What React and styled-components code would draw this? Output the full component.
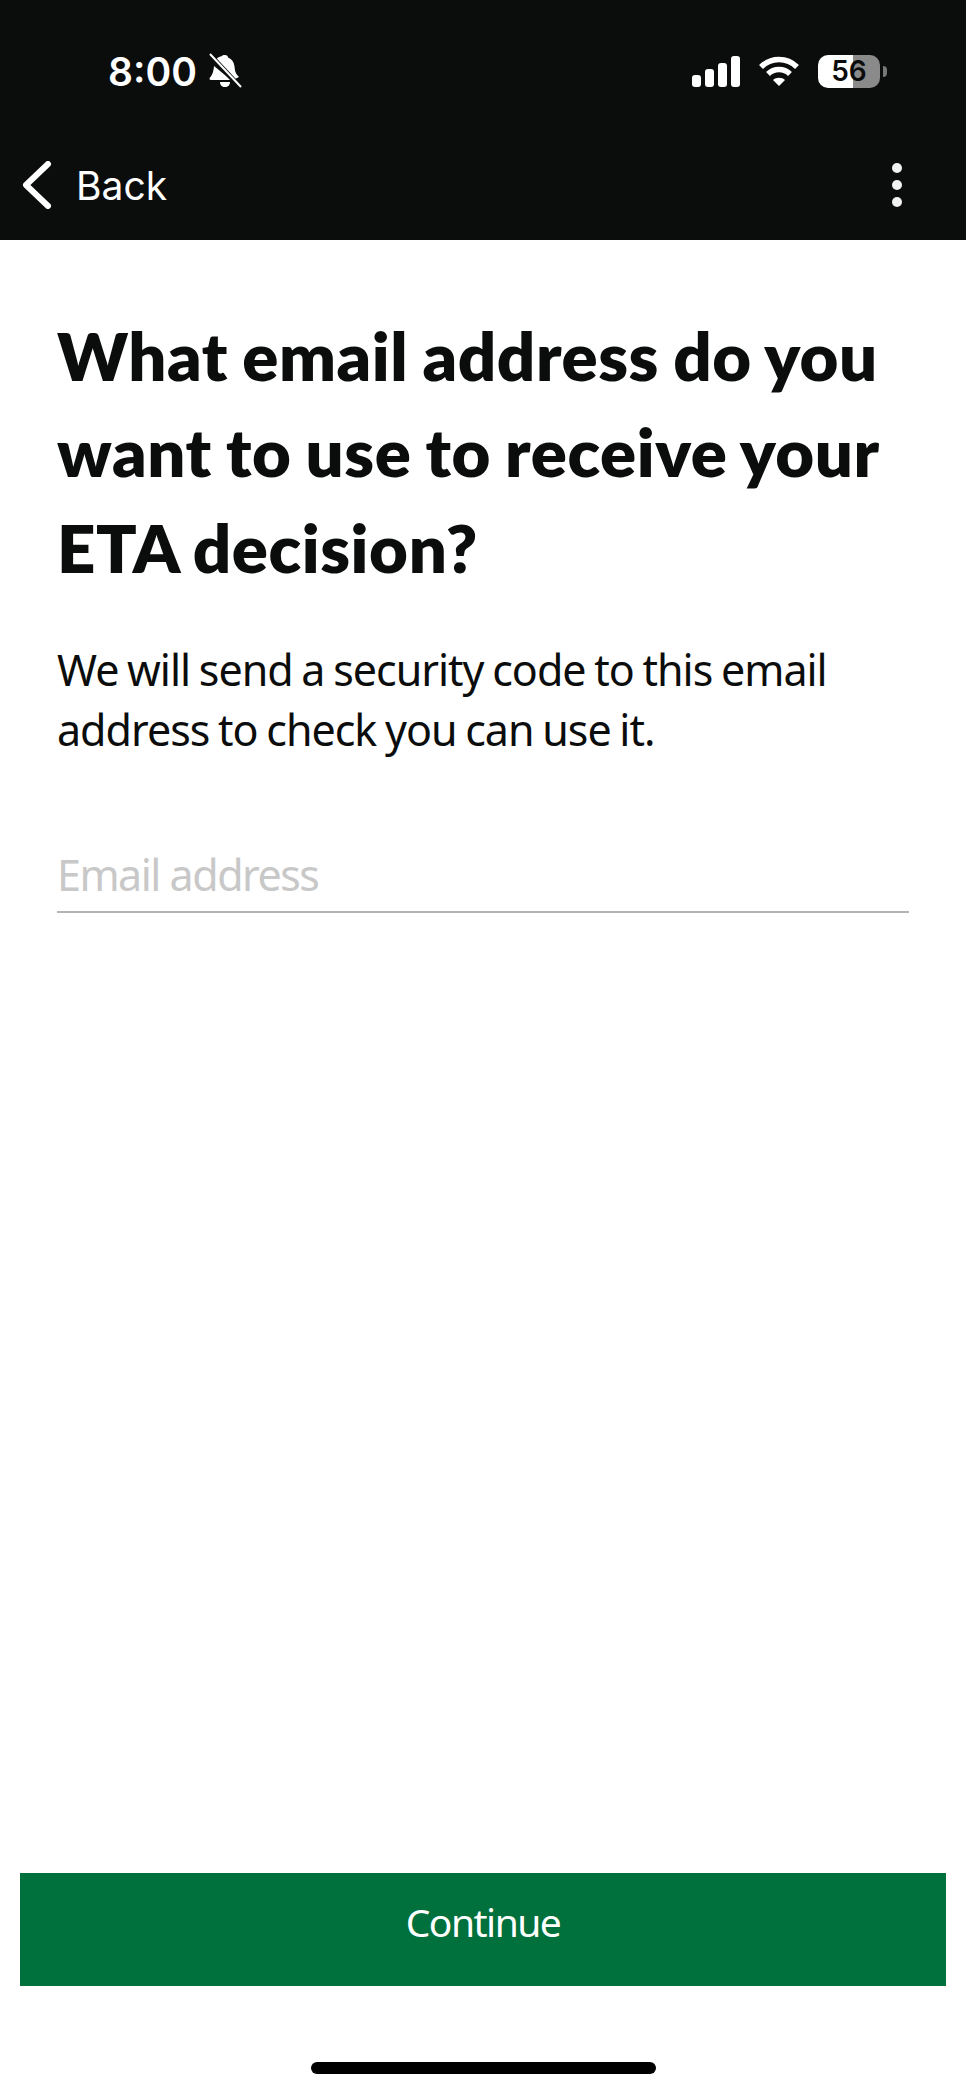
import React from "react";
import styled, { createGlobalStyle } from "styled-components";

const Global = createGlobalStyle`
  html, body { margin: 0; padding: 0; background: #fff; }
  #root { height: 2094px; }
`;
const Page = styled.div`
  width: 966px; height: 2094px; display: flex; flex-direction: column;
  font-family: "Noto Sans", "Open Sans", sans-serif; color: #0b0c0c; overflow: hidden;
`;
const Header = styled.header`
  height: 240px; background: #0b0c0c; color: #fff; display: flex; flex-direction: column;
  box-sizing: border-box; flex: none;
`;
const StatusBar = styled.div`
  height: 142px; flex: none; display: flex; align-items: center; justify-content: space-between;
  padding: 0 86px 0 108px; box-sizing: border-box;
`;
const StatusLeft = styled.div`display: flex; align-items: center; gap: 11px;`;
const Time = styled.span`font: 600 39px/1 Inter, sans-serif;`;
const StatusRight = styled.div`display: flex; align-items: center; gap: 18px;`;
const Battery = styled.div`
  width: 62px; height: 33px; border-radius: 10px; display: flex; align-items: center; justify-content: center;
  background: linear-gradient(90deg, #fff 0 56%, #8a8a8a 56% 100%);
  color: #0b0c0c; font: 600 28px/1 Inter, sans-serif; position: relative;
  &::after { content: ""; position: absolute; right: -7px; top: 11px; width: 4px; height: 11px; background: #777; border-radius: 0 4px 4px 0; }
`;
const NavBar = styled.nav`
  flex: 1; display: flex; align-items: center; justify-content: space-between;
  padding: 0 62px 12px 22px;
`;
const BackLink = styled.div`
  display: flex; align-items: center; gap: 24px; font: 400 39px/1 Inter, sans-serif;
`;
const Main = styled.main`flex: 1; padding: 0 57px; display: flex; flex-direction: column;`;
const Title = styled.h1`
  margin: 0; padding-top: 67px; font: 800 67px/96px Lato, "Noto Sans", sans-serif;
  letter-spacing: 0.6px; word-spacing: -2px;
`;
const Lead = styled.p`
  margin: 45px 0 0; font: 400 43px/60px "Noto Sans", sans-serif;
  letter-spacing: -1px; word-spacing: -1.5px;
`;
const Field = styled.div`
  margin-top: 89px; border-bottom: 2px solid #b1b4b6; padding-bottom: 10px;
  font: 400 43px/1.2 "Noto Sans", sans-serif; color: #c8c8c8; letter-spacing: -1.5px;
`;
const Footer = styled.footer`
  padding: 0 20px; display: flex; flex-direction: column; align-items: center;
`;
const Button = styled.button`
  width: 926px; height: 113px; border: 0; padding: 0 0 16px; background: #00703c; color: #fff;
  font: 400 39px "Noto Sans", sans-serif; letter-spacing: -1.5px;
`;
const HomeBar = styled.div`width: 345px; height: 12px; border-radius: 6px; background: #000; margin: 76px 0 20px;`;

const Bell = () => (
  <svg width="34" height="36" viewBox="0 0 34 36" fill="none">
    <path d="M17 2c2 0 3 1 3 2.500 4 1.500 6 5 6.500 9l.5 4c.5 2.500 2 4.500 4 6.500l-4 2L8 6.500C10 4 12 3.500 14 3c.2-.6 1.300-1 3-1ZM6 13l17 14H3c-1.500 0-2-1.500-1-2.500C4 22.500 5.500 19 6 13ZM12 29h10c0 3-2 5-5 5s-5-2-5-5Z" fill="#fff"/>
    <path d="M2 2l30 32" stroke="#0b0c0c" strokeWidth="5"/>
    <path d="M2 1l31 33" stroke="#fff" strokeWidth="2"/>
  </svg>
);
const Signal = () => (
  <svg width="48" height="31" viewBox="0 0 48 31" fill="#fff">
    <rect x="0" y="19" width="9" height="12" rx="3"/>
    <rect x="13" y="13" width="9" height="18" rx="3"/>
    <rect x="26" y="7" width="9" height="24" rx="3"/>
    <rect x="39" y="0" width="9" height="31" rx="3"/>
  </svg>
);
const Wifi = () => (
  <svg width="42" height="31" viewBox="0 0 42 31" fill="none" stroke="#fff" strokeWidth="5.500">
    <path d="M3 11C13 1 29 1 39 11"/>
    <path d="M10 18C16 12 26 12 32 18"/>
    <path d="M21 30l-6-6c3-3 9-3 12 0Z" fill="#fff" stroke="none"/>
  </svg>
);
const Chevron = () => (
  <svg width="30" height="48" viewBox="0 0 30 48" fill="none" stroke="#fff" strokeWidth="6" strokeLinecap="round" strokeLinejoin="round">
    <path d="M26 3 4 24l22 21"/>
  </svg>
);
const Dots = () => (
  <svg width="14" height="48" viewBox="0 0 14 48" fill="#f2f2f2">
    <circle cx="7" cy="7" r="5"/><circle cx="7" cy="24" r="5"/><circle cx="7" cy="41" r="5"/>
  </svg>
);

export default function App() {
  return (
    <Page>
      <Global />
      <Header>
        <StatusBar>
          <StatusLeft><Time>8:00</Time><Bell /></StatusLeft>
          <StatusRight><Signal /><Wifi /><Battery>56</Battery></StatusRight>
        </StatusBar>
        <NavBar>
          <BackLink><Chevron />Back</BackLink>
          <Dots />
        </NavBar>
      </Header>
      <Main>
        <Title>What email address do you want to use to receive your ETA decision?</Title>
        <Lead>We will send a security code to this email address to check you can use it.</Lead>
        <Field>Email address</Field>
      </Main>
      <Footer>
        <Button>Continue</Button>
        <HomeBar />
      </Footer>
    </Page>
  );
}
